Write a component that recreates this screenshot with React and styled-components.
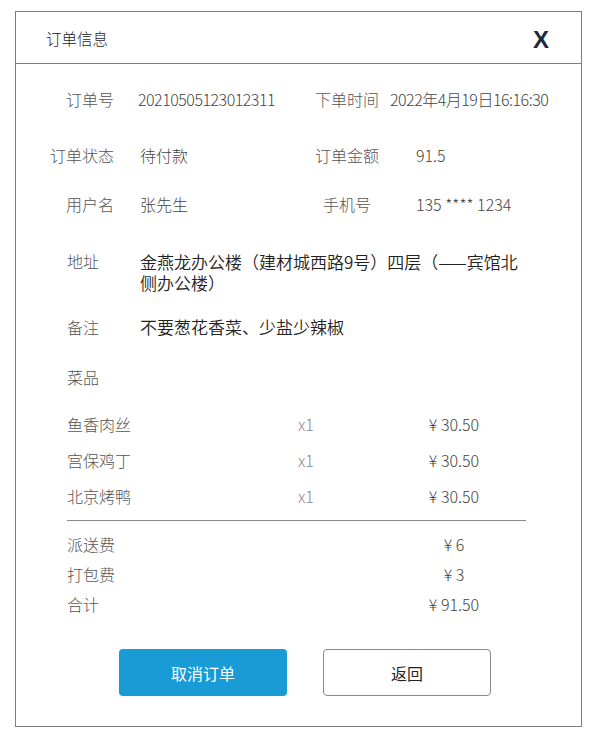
import React from "react";
import styled, { createGlobalStyle } from "styled-components";

const GlobalStyle = createGlobalStyle`
  body {
    margin: 0;
    background: #fff;
    font-family: "Noto Sans CJK SC", "Noto Sans", sans-serif;
    font-weight: 300;
    color: #333;
  }
`;

const Panel = styled.div`
  box-sizing: border-box;
  width: 567px;
  margin: 11px 0 0 15px;
  border: 1px solid #7f7f7f;
  padding-bottom: 30px;
`;

const Header = styled.div`
  display: flex;
  align-items: center;
  justify-content: space-between;
  height: 51px;
  padding: 0 32px 0 30px;
  border-bottom: 1px solid #7f7f7f;
`;

const Title = styled.div`
  font-size: 15.5px;
  color: #222;
`;

const Close = styled.button`
  border: none;
  background: none;
  padding: 0;
  margin-top: 4px;
  font-family: "Liberation Sans", Arial, sans-serif;
  font-weight: 700;
  font-size: 24px;
  line-height: 1;
  color: #1b2840;
  cursor: pointer;
`;

const Body = styled.div`
  padding-top: 23px;
`;

const InfoRow = styled.div`
  display: grid;
  grid-template-columns: 98px 196px 74px 1fr;
  line-height: 24px;
  font-size: 16px;
  margin-top: ${p => p.$top || 0}px;
`;

const Label = styled.div`
  color: #555;
  text-align: ${p => (p.$center ? "center" : "right")};
`;

const Value = styled.div`
  color: #444;
  padding-left: ${p => p.$indent ?? 26}px;
  letter-spacing: ${p => (p.$tight ? "-0.5px" : "0")};
  white-space: nowrap;
`;

const Section = styled.div`
  padding: 0 40px 0 51px;
  margin-top: ${p => p.$top || 0}px;
`;

const NoteRow = styled.div`
  display: grid;
  grid-template-columns: 73px 1fr;
  margin-top: ${p => p.$top || 0}px;
`;

const NoteLabel = styled.div`
  font-size: 16px;
  line-height: ${p => p.$lh || 24}px;
  color: #555;
`;

const NoteText = styled.div`
  font-size: 17px;
  line-height: ${p => p.$lh || 24}px;
  color: #222;
  font-weight: 350;
  max-width: 390px;
`;

const DishList = styled.div`
  margin-top: 17px;
`;

const ItemRow = styled.div`
  display: grid;
  grid-template-columns: 231px 106px 100px 1fr;
  font-size: 16px;
  line-height: ${p => p.$lh}px;
  color: #555;
`;

const Qty = styled.div`
  color: #888;
`;

const Price = styled.div`
  text-align: center;
  color: #444;
`;

const Divider = styled.div`
  width: 459px;
  height: 1px;
  background: #8a8a8a;
  margin: 6px 0 8px;
`;

const Actions = styled.div`
  display: flex;
  gap: 36px;
  padding-left: 103px;
  margin-top: 30px;
`;

const Button = styled.button`
  box-sizing: border-box;
  width: 168px;
  height: 47px;
  border-radius: 4px;
  font-family: inherit;
  font-size: 16px;
  font-weight: 400;
  cursor: pointer;
  border: ${p => (p.$primary ? "none" : "1px solid #8a8a8a")};
  background: ${p => (p.$primary ? "#199cd6" : "#fff")};
  color: ${p => (p.$primary ? "#fff" : "#222")};
`;

const DISHES = [
  { name: "鱼香肉丝", qty: "x1", price: "¥ 30.50" },
  { name: "宫保鸡丁", qty: "x1", price: "¥ 30.50" },
  { name: "北京烤鸭", qty: "x1", price: "¥ 30.50" }
];

const FEES = [
  { name: "派送费", price: "¥ 6" },
  { name: "打包费", price: "¥ 3" },
  { name: "合计", price: "¥ 91.50" }
];

const App = () => (
  <>
    <GlobalStyle />
    <Panel>
      <Header>
        <Title>订单信息</Title>
        <Close>X</Close>
      </Header>
      <Body>
        <InfoRow>
          <Label>订单号</Label>
          <Value $indent={24} $tight>20210505123012311</Value>
          <Label $center>下单时间</Label>
          <Value $indent={6} $tight>2022年4月19日16:16:30</Value>
        </InfoRow>
        <InfoRow $top={32}>
          <Label>订单状态</Label>
          <Value>待付款</Value>
          <Label $center>订单金额</Label>
          <Value $indent={32}>91.5</Value>
        </InfoRow>
        <InfoRow $top={25}>
          <Label>用户名</Label>
          <Value>张先生</Value>
          <Label $center>手机号</Label>
          <Value $indent={32}>135 **** 1234</Value>
        </InfoRow>
        <Section $top={35}>
          <NoteRow>
            <NoteLabel $lh={21}>地址</NoteLabel>
            <NoteText $lh={21}>金燕龙办公楼（建材城西路9号）四层（——宾馆北侧办公楼）</NoteText>
          </NoteRow>
          <NoteRow $top={22}>
            <NoteLabel>备注</NoteLabel>
            <NoteText>不要葱花香菜、少盐少辣椒</NoteText>
          </NoteRow>
          <NoteRow $top={26}>
            <NoteLabel>菜品</NoteLabel>
          </NoteRow>
          <DishList>
            {DISHES.map(d => (
              <ItemRow key={d.name} $lh={36}>
                <div>{d.name}</div>
                <Qty>{d.qty}</Qty>
                <Price>{d.price}</Price>
              </ItemRow>
            ))}
          </DishList>
          <Divider />
          {FEES.map(f => (
            <ItemRow key={f.name} $lh={30}>
              <div>{f.name}</div>
              <div />
              <Price>{f.price}</Price>
            </ItemRow>
          ))}
        </Section>
        <Actions>
          <Button $primary>取消订单</Button>
          <Button>返回</Button>
        </Actions>
      </Body>
    </Panel>
  </>
);

export default App;
